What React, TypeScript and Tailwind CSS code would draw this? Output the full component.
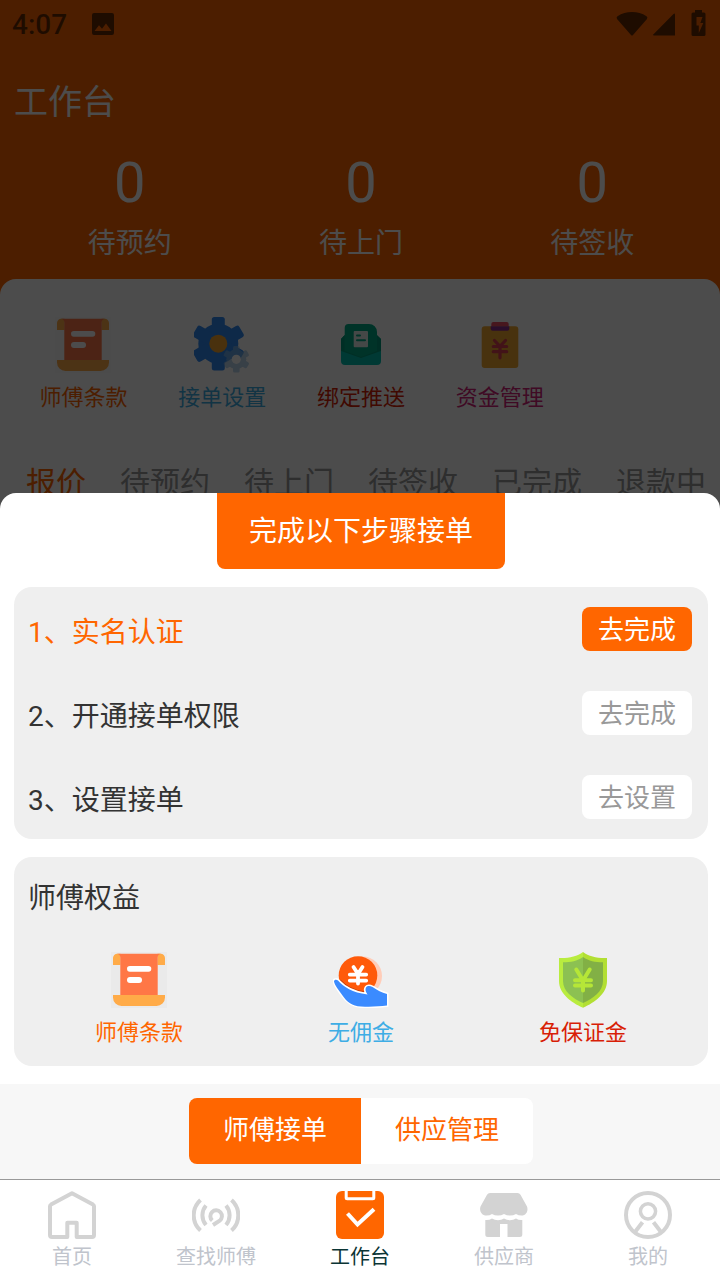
import React, { useState } from 'react';

interface IconProps {
  className?: string;
}

const ScrollIcon: React.FC<IconProps> = ({ className }) => (
  <svg className={className} viewBox="0 0 56 56" aria-hidden="true">
    <rect width="56" height="56" fill="#808080" fillOpacity="0.04" />
    <path d="M9.5 13H2V6a4.300 4.300 0 0 1 4.300-4.300h3.200zM46.500 13H54V6a4.300 4.300 0 0 0-4.300-4.300h-3.200z" fill="#ffab48" />
    <path d="M6 1.700h44a4 4 0 0 0-3.300 4V43H9.300V5.700a4 4 0 0 0-3.300-4z" fill="#ff7746" />
    <path d="M2 43h52v2.500a8.500 8.500 0 0 1-8.500 8.500h-35A8.500 8.500 0 0 1 2 45.500z" fill="#ffab48" />
    <rect x="16" y="14" width="24.300" height="5.700" rx="2.850" fill="#fff" />
    <rect x="16" y="25" width="15" height="6" rx="3" fill="#fff" />
  </svg>
);

const GearIcon: React.FC<IconProps> = ({ className }) => (
  <svg className={className} viewBox="0 0 56 56" aria-hidden="true">
    <g fill="#3089f2">
      <circle cx="24.300" cy="26.700" r="20" />
      <rect x="17.800" y="0" width="13" height="53.400" rx="2.500" />
      <rect x="17.800" y="0" width="13" height="53.400" rx="2.500" transform="rotate(60 24.300 26.700)" />
      <rect x="17.800" y="0" width="13" height="53.400" rx="2.500" transform="rotate(120 24.300 26.700)" />
    </g>
    <circle cx="24.300" cy="26.700" r="9" fill="#f6a52f" />
    <g fill="#8fbbe2" opacity="0.600">
      <circle cx="42.300" cy="42.300" r="10" />
      <rect x="39" y="29" width="6.600" height="26.600" rx="1.500" />
      <rect x="39" y="29" width="6.600" height="26.600" rx="1.500" transform="rotate(60 42.300 42.300)" />
      <rect x="39" y="29" width="6.600" height="26.600" rx="1.500" transform="rotate(120 42.300 42.300)" />
    </g>
    <circle cx="42.300" cy="42.300" r="4.600" fill="#fff" />
  </svg>
);

const MailIcon: React.FC<IconProps> = ({ className }) => (
  <svg className={className} viewBox="0 0 56 56" aria-hidden="true">
    <path d="M15.500 7h20.500a8 8 0 0 1 8 8v3.500L48 22v20H8V22l3.700-4v-7A4 4 0 0 1 15.500 7z" fill="#00ab86" />
    <path d="M11.700 18v16L28 40l16-6V18l4 4v20H8V22z" fill="#009c7c" />
    <path d="M8 34l20 7 20-7v10a4 4 0 0 1-4 4H12a4 4 0 0 1-4-4z" fill="#00bfb0" />
    <rect x="20.700" y="14" width="14.300" height="16.300" rx="1" fill="#e8f2ef" />
    <path d="M24 18.500h3M24 23.300h8" stroke="#00ab86" strokeWidth="2" strokeLinecap="round" />
  </svg>
);

const ClipboardIcon: React.FC<IconProps> = ({ className }) => (
  <svg className={className} viewBox="0 0 56 56" aria-hidden="true">
    <rect x="9.700" y="9.300" width="36.600" height="41.700" rx="3" fill="#f0a82f" />
    <path d="M19.300 9.300V7a2 2 0 0 1 2-2h13.400a2 2 0 0 1 2 2v2.300z" fill="#ee4f66" />
    <path d="M18.700 9.300h18.600v2.400a2 2 0 0 1-2 2H20.700a2 2 0 0 1-2-2z" fill="#8e2f90" />
    <path d="M22.500 23.500L28 29.300l5.500-5.800M28 29.300v11.500M21.300 29.500h13.400M21.300 34.700h13.400" stroke="#dd4150" strokeWidth="3.200" strokeLinecap="round" fill="none" />
  </svg>
);

const HandCoinIcon: React.FC<IconProps> = ({ className }) => (
  <svg className={className} viewBox="0 0 56 56" aria-hidden="true">
    <circle cx="29.500" cy="24" r="19.500" fill="#ffcdb9" />
    <circle cx="25" cy="23.500" r="19.300" fill="#ff5a0a" />
    <path d="M7 28.500c6 7 14 10.500 24 11.800" stroke="#c63c02" strokeWidth="2" fill="none" />
    <path d="M20.500 15l4.500 7 4.500-7M25 22v9.500M16.800 22.600h16.400M16.800 28.600h16.400" stroke="#fff" strokeWidth="3.800" strokeLinecap="round" strokeLinejoin="round" fill="none" />
    <path d="M1 29.500c0-2 2.500-2.500 4-1C11 35 19 40.500 34.500 42.500c-2-2.500-2.500-5.500-1.500-7 1.500-2 4-1.800 6.500-.5 5 3.500 9 5.500 14.500 7v11.500c-8 1-16 1.500-26 1-9-.5-14-4.500-18.500-11C6.500 39 2 34 1 29.500z" fill="#3b8bff" stroke="#fff" strokeWidth="3" paintOrder="stroke" />
  </svg>
);

const ShieldIcon: React.FC<IconProps> = ({ className }) => (
  <svg className={className} viewBox="0 0 56 56" aria-hidden="true">
    <path d="M28 0C22 4.500 13 6.500 4 6v23c0 12.500 12 21.500 24 26.700z" fill="#b9ec3f" />
    <path d="M28 0c6 4.500 15 6.500 24 6v23c0 12.500-12 21.500-24 26.700z" fill="#b2df33" />
    <path d="M28 5c-6 4-12 5.300-20 5.300V29c0 10.500 10 17.500 20 22z" fill="#8cc152" />
    <path d="M28 5c6 4 12 5.300 20 5.300V29c0 10.500-10 17.500-20 22z" fill="#82b045" />
    <path d="M21.300 17.500L28 28.500l6.700-11M28 28v10.500M20 28.200h16M20 33.500h16" stroke="#b5e637" strokeWidth="4" strokeLinecap="round" fill="none" />
  </svg>
);

const HomeIcon: React.FC<IconProps> = ({ className }) => (
  <svg className={className} viewBox="0 0 48 48" fill="none" stroke="#d3d3d3" strokeWidth="4" strokeLinejoin="round" aria-hidden="true">
    <path d="M19.300 46H4q-2 0-2-2V15.200q0-1 1-1.600L24 2.200l21 11.400q1 .6 1 1.600V44q0 2-2 2H28.700V31.700h-9.400z" />
  </svg>
);

const FindIcon: React.FC<IconProps> = ({ className }) => (
  <svg className={className} viewBox="0 0 48 48" fill="none" stroke="#d3d3d3" strokeWidth="4" aria-hidden="true">
    <path d="M8.500 9a20.500 20.500 0 0 0 0 30.500M14 14.500a15 15 0 0 0 0 19.500M39.500 9a20.500 20.500 0 0 1 0 30.500M34 14.500a15 15 0 0 1 0 19.500" />
    <path d="M20.300 29.500a5.800 5.800 0 1 1 7.400.2L21 34" />
  </svg>
);

const WorkbenchIcon: React.FC<IconProps> = ({ className }) => (
  <svg className={className} viewBox="0 0 48 48" fill="none" aria-hidden="true">
    <rect width="48" height="48" rx="6" fill="#ff6600" />
    <path d="M10.200-1V6.700q0 1 1 1h25.600q1 0 1-1V-1" stroke="#fff" strokeWidth="3" />
    <path d="M11.500 22.500l10 11L38 18.300" stroke="#fff" strokeWidth="4" />
  </svg>
);

const StoreIcon: React.FC<IconProps> = ({ className }) => (
  <svg className={className} viewBox="0 0 48 48" fill="#d3d3d3" aria-hidden="true">
    <path d="M10 2h27.500q2 0 3 1.800L47 15.500c1.500 4-.5 9-5.500 9q-3 0-5.500-1.500-2.500 1.600-6 1.600T24 23q-2.500 1.600-6 1.600T12 23q-2.200 1.500-5.500 1.500c-5 0-7.500-5-6-9L7 3.800Q8 2 10 2z" />
    <path d="M5.300 29q3.700.5 6.700-1.500 2.700 1.700 6 1.700t6-1.700q2.700 1.700 6 1.700t6-1.700q3 2 6.300 1.500v14.500q0 2.500-2.500 2.500H27.500V33H20v13H7.800q-2.500 0-2.500-2.500z" />
  </svg>
);

const UserIcon: React.FC<IconProps> = ({ className }) => (
  <svg className={className} viewBox="0 0 48 48" fill="none" stroke="#d3d3d3" strokeWidth="4" aria-hidden="true">
    <circle cx="24" cy="24" r="22" />
    <circle cx="24" cy="20.300" r="7.600" strokeWidth="3.500" />
    <path d="M18.500 31.300L11 41M29.500 31.300L37 41" />
  </svg>
);

const StatusBar = () => (
  <div className="flex h-12 items-center justify-between px-3 text-black/60">
    <div className="flex items-center gap-6">
      <span className="pt-0.5 text-[28px] leading-10 font-medium">4:07</span>
      <svg className="h-6 w-6" viewBox="0 0 24 24" fill="currentColor" aria-hidden="true">
        <path fillRule="evenodd" d="M3 1h18a2 2 0 0 1 2 2v18a2 2 0 0 1-2 2H3a2 2 0 0 1-2-2V3a2 2 0 0 1 2-2zM3.500 19h17l-5.500-7.500-4 5.300-3-3.600z" />
      </svg>
    </div>
    <div className="flex items-center">
      <svg className="h-6 w-8" viewBox="0 0 32 24" fill="currentColor" aria-hidden="true">
        <path d="M15 23L1 7Q0 5 1.500 4.200 8 0 16 0t14.500 4.200Q32 5 31 7L17 23q-1 1-2 0z" />
      </svg>
      <svg className="ml-1 h-6 w-6" viewBox="0 0 24 24" fill="currentColor" aria-hidden="true">
        <path d="M23 2.500V23.500H2q-1.500 0-.5-1.200L21.500 2q1.500-1 1.500.5z" />
      </svg>
      <svg className="ml-3 h-7 w-5" viewBox="0 0 20 28" fill="currentColor" aria-hidden="true">
        <path fillRule="evenodd" d="M7 0h7v2.500h2q1.500 0 1.500 1.500v20.500q0 1.500-1.500 1.500H5Q3.500 26 3.500 24.500V4Q3.500 2.500 5 2.500h2zM8.500 7v8.500h2.300V23l4.500-10h-3l2.200-6z" />
      </svg>
    </div>
  </div>
);

const stats = [
  { label: '待预约', value: 0 },
  { label: '待上门', value: 0 },
  { label: '待签收', value: 0 },
];

const shortcuts = [
  { label: '师傅条款', color: 'text-[#ff6600]', Icon: ScrollIcon },
  { label: '接单设置', color: 'text-[#3eade5]', Icon: GearIcon },
  { label: '绑定推送', color: 'text-[#d81e06]', Icon: MailIcon },
  { label: '资金管理', color: 'text-[#d4237a]', Icon: ClipboardIcon },
];

const benefits = [
  { label: '师傅条款', color: 'text-[#ff6600]', Icon: ScrollIcon },
  { label: '无佣金', color: 'text-[#3eade5]', Icon: HandCoinIcon },
  { label: '免保证金', color: 'text-[#d81e06]', Icon: ShieldIcon },
];

const orderTabs = ['报价', '待预约', '待上门', '待签收', '已完成', '退款中'];

const steps = [
  { label: '1、实名认证', action: '去完成', active: true },
  { label: '2、开通接单权限', action: '去完成', active: false },
  { label: '3、设置接单', action: '去设置', active: false },
];

const navItems = [
  { label: '首页', Icon: HomeIcon },
  { label: '查找师傅', Icon: FindIcon },
  { label: '工作台', Icon: WorkbenchIcon },
  { label: '供应商', Icon: StoreIcon },
  { label: '我的', Icon: UserIcon },
];

interface IconLinkProps {
  label: string;
  color: string;
  Icon: React.FC<IconProps>;
}

const IconLink: React.FC<IconLinkProps> = ({ label, color, Icon }) => (
  <a href="#" className={`flex flex-col items-center gap-[9px] text-[22px] leading-8 ${color}`}>
    <Icon className="h-14 w-14" />
    {label}
  </a>
);

const Dashboard = () => (
  <>
    <header className="text-white">
      <StatusBar />
      <h1 className="px-3.5 pt-[30px] text-[34px] leading-12">工作台</h1>
      <div className="grid grid-cols-3 pt-[25px] pr-3 pb-[15px] pl-3.5 text-center">
        {stats.map((item) => (
          <div key={item.label}>
            <div className="text-[56px] leading-16">{item.value}</div>
            <div className="mt-[9px] text-[28px] leading-10">{item.label}</div>
          </div>
        ))}
      </div>
    </header>
    <section className="flex-1 rounded-t-2xl bg-white">
      <div className="grid grid-cols-5 pt-[38px] pr-3 pl-3.5">
        {shortcuts.map((item) => (
          <IconLink key={item.label} {...item} />
        ))}
      </div>
      <div className="flex gap-[34px] overflow-hidden px-[26px] pt-[45px] text-[30px] leading-12 whitespace-nowrap text-[#999999]">
        {orderTabs.map((tab, i) => (
          <button key={tab} type="button" className={i === 0 ? 'text-[#ff6600]' : ''}>
            {tab}
          </button>
        ))}
      </div>
    </section>
  </>
);

const StepsSheet = () => (
  <div className="rounded-t-2xl bg-white pr-3 pb-[18px] pl-3.5 text-[28px] leading-10 text-[#333333]">
    <h2 className="mx-auto w-fit rounded-b-lg bg-[#ff6600] px-8 pt-[19px] pb-[17px] text-white">完成以下步骤接单</h2>
    <ol className="mt-[18px] rounded-[18px] bg-[#efefef] pr-4 pl-3.5">
      {steps.map((step) => (
        <li key={step.label} className="flex h-[84px] items-center justify-between">
          <span className={step.active ? 'pt-2 text-[#ff6600]' : 'pt-2'}>{step.label}</span>
          <button
            type="button"
            className={`h-11 rounded-lg px-4 pt-0.5 text-[26px] leading-10 ${
              step.active ? 'bg-[#ff6600] text-white' : 'bg-white text-[#999999]'
            }`}
          >
            {step.action}
          </button>
        </li>
      ))}
    </ol>
    <div className="mt-[18px] rounded-[18px] bg-[#efefef] px-3.5 pt-[22px] pb-[17px]">
      <h3>师傅权益</h3>
      <div className="mt-[33px] grid grid-cols-3">
        {benefits.map((item) => (
          <IconLink key={item.label} {...item} />
        ))}
      </div>
    </div>
  </div>
);

const App = () => {
  const [mode, setMode] = useState('师傅接单');

  return (
    <div className="flex min-h-screen flex-col bg-white font-['Roboto','Noto_Sans_CJK_SC',sans-serif]">
      <main className="relative flex flex-1 flex-col bg-[#ff6600]">
        <Dashboard />
        <div className="absolute inset-0 flex flex-col justify-end bg-black/70">
          <StepsSheet />
        </div>
      </main>
      <div className="flex justify-center bg-[#f7f7f7] pt-3.5 pr-3 pb-[15px] pl-3.5">
        <div className="flex overflow-hidden rounded-lg">
          {['师傅接单', '供应管理'].map((item) => (
            <button
              key={item}
              type="button"
              onClick={() => setMode(item)}
              className={`h-[66px] w-[172px] pb-0.5 text-[26px] leading-10 ${
                mode === item ? 'bg-[#ff6600] text-white' : 'bg-white text-[#ff6600]'
              }`}
            >
              {item}
            </button>
          ))}
        </div>
      </div>
      <nav className="grid grid-cols-5 border-t border-[#999999] bg-white pt-[11px] pb-[9px]">
        {navItems.map(({ label, Icon }) => (
          <a
            key={label}
            href="#"
            className={`flex flex-col items-center gap-1 text-[20px] leading-7 ${
              label === '工作台' ? 'text-[#0b3535]' : 'text-[#c0c4cc]'
            }`}
          >
            <Icon className="h-12 w-12" />
            {label}
          </a>
        ))}
      </nav>
    </div>
  );
};

export default App;
